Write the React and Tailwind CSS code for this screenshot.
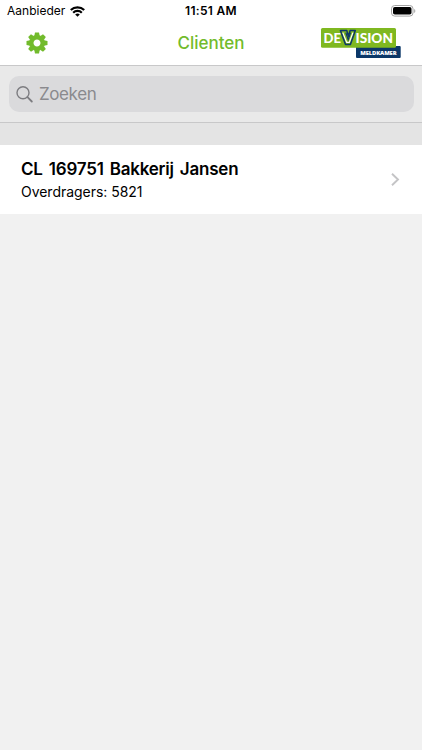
const clients = [{ id: 'CL 169751', name: 'Bakkerij Jansen', transmitters: '5821' }];

const teeth = [0, 45, 90, 135, 180, 225, 270, 315];

function WifiIcon() {
  return (
    <svg className="ml-[5px] h-[11px] w-[15px]" viewBox="0 0 15 11" fill="none" stroke="#000" strokeWidth="2.2">
      <path d="M.8 4a9.6 9.6 0 0 1 13.4 0" />
      <path d="M3.2 6.7a6.1 6.1 0 0 1 8.6 0" />
      <path d="M7.5 10.8 5.2 8.5a3.3 3.3 0 0 1 4.6 0z" fill="#000" stroke="none" />
    </svg>
  );
}

function BatteryIcon() {
  return (
    <svg className="h-[12px] w-[25px]" viewBox="0 0 25 12">
      <rect x=".5" y=".5" width="21.5" height="10.6" rx="3.2" fill="none" stroke="#a3a3a3" />
      <rect x="2" y="2" width="18.5" height="7.6" rx="1.8" />
      <path d="M23.2 4v4c1.5-.7 1.5-3.3 0-4z" fill="#a3a3a3" />
    </svg>
  );
}

function GearIcon() {
  return (
    <svg className="h-[22px] w-[22px]" viewBox="-11 -11 22 22" fill="#72bb2c">
      {teeth.map((angle) => (
        <path key={angle} d="M-2.7-7-2-10.5H2L2.7-7z" transform={`rotate(${angle})`} />
      ))}
      <circle r="5.7" fill="none" stroke="#72bb2c" strokeWidth="4.4" />
    </svg>
  );
}

function Logo() {
  return (
    <svg className="h-[32px] w-[82px]" viewBox="0 0 82 32" fontFamily="Lato, sans-serif">
      <rect x="36" y="18" width="44.7" height="12" rx="1" fill="#0b3768" />
      <rect x="1" y="0" width="75" height="19.7" rx="1.5" fill="#7fb820" />
      <g fill="#fff" fontWeight="900" fontSize="14">
        <text x="3.5" y="14.6" textLength="17.5" lengthAdjust="spacingAndGlyphs">DE</text>
        <text x="35.6" y="14.6" textLength="37.4" lengthAdjust="spacingAndGlyphs">ISION</text>
      </g>
      <path d="M20.4 2.6h6.4l1.6 5.6 1.7-5.6h5.2l-4.9 13.8h-4.9z" fill="#7fb820" stroke="#0b3768" strokeWidth="1.5" strokeLinejoin="round" />
      <path d="m22.8 4.6 3.9 9.8h2.6l3.6-9.8" fill="none" stroke="#fff" strokeWidth="1.2" />
      <path d="m25.8 4.6 2.4 7 2.4-7" fill="none" stroke="#0b3768" strokeWidth="1.2" />
      <text x="40.3" y="26.7" fill="#fff" fontFamily="'Open Sans', sans-serif" fontWeight="800" fontSize="5.8" textLength="36.3" lengthAdjust="spacing">MELDKAMER</text>
    </svg>
  );
}

function StatusBar() {
  return (
    <div className="grid h-[22px] grid-cols-3 items-center pl-[7px] pr-[6px] text-black">
      <div className="flex items-center text-[12px] tracking-[0.02px]">
        Aanbieder
        <WifiIcon />
      </div>
      <div className="pr-px text-center text-[12px] font-semibold tracking-[0.3px]">11:51 AM</div>
      <div className="flex justify-end">
        <BatteryIcon />
      </div>
    </div>
  );
}

function NavBar() {
  return (
    <header className="grid h-[43px] grid-cols-3 items-center pl-[26px] pr-[20px]">
      <button aria-label="Instellingen" className="mb-[2px] w-[22px]">
        <GearIcon />
      </button>
      <h1 className="pr-[6px] text-center text-[17px] font-medium text-[#72bb2c]">Clienten</h1>
      <div className="flex justify-end">
        <Logo />
      </div>
    </header>
  );
}

function SearchBar() {
  return (
    <div className="h-[58px] border-y border-[#c8c8c9] bg-[#e9e9e9] px-[8.5px] pt-[10px]">
      <div className="flex h-[36px] items-center rounded-[10px] bg-[#dadadc] pl-[7.5px] text-[17px] tracking-[-0.4px] text-[#8a8a8e]">
        <svg className="mr-[6px] h-[17px] w-[17px]" viewBox="0 0 17 17" fill="none" stroke="#7c7c80" strokeWidth="1.4" strokeLinecap="round">
          <circle cx="7" cy="6.7" r="6" />
          <path d="m11.5 11.2 4.3 4.3" strokeWidth="1.8" />
        </svg>
        <span className="pt-px">Zoeken</span>
      </div>
    </div>
  );
}

function ClientRow({ client }) {
  return (
    <li className="flex h-[69px] items-center justify-between bg-white pl-[21px] pr-[22px] text-black">
      <div>
        <p className="text-[17px] leading-[24px] font-semibold tracking-[-0.2px] [word-spacing:1.9px]">
          {client.id} {client.name}
        </p>
        <p className="text-[14px] leading-[21px] tracking-[-0.03px]">Overdragers: {client.transmitters}</p>
      </div>
      <svg className="h-[13px] w-[9px]" viewBox="0 0 9 13" fill="none" stroke="#c4c4c6" strokeWidth="1.9">
        <path d="m1 .8 6 5.7-6 5.7" />
      </svg>
    </li>
  );
}

export default function App() {
  return (
    <div className="flex h-screen w-full flex-col overflow-hidden bg-[#f1f1f1] font-['Inter',sans-serif]">
      <div className="h-[65px] bg-white">
        <StatusBar />
        <NavBar />
      </div>
      <SearchBar />
      <div className="h-[22px] bg-[#e4e4e4]" />
      <ul>
        {clients.map((client) => (
          <ClientRow key={client.id} client={client} />
        ))}
      </ul>
    </div>
  );
}
